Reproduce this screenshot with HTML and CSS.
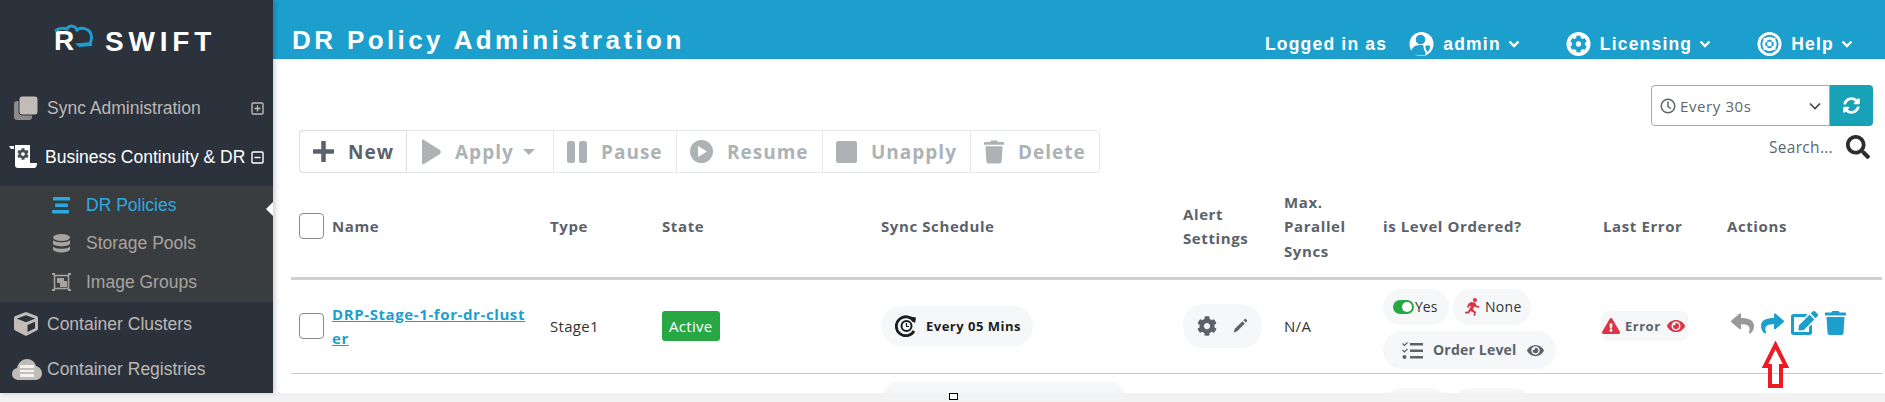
FILE: index.html
```html
<!DOCTYPE html>
<html lang="en">
<head>
    <meta charset="UTF-8">
    <meta name="viewport" content="width=device-width, initial-scale=1.0">
    <title>DR Policy Administration - RSWIFT</title>
    <link rel="stylesheet" href="styles.css">
</head>
<body>
    <svg class="sprites" width="0" height="0">
        <symbol id="i-eye" viewBox="0 0 576 512"><path d="M572.52 241.4C518.29 135.59 410.93 64 288 64S57.68 135.64 3.48 241.41a32.35 32.35 0 0 0 0 29.19C57.71 376.41 165.07 448 288 448s230.32-71.64 284.52-177.41a32.35 32.35 0 0 0 0-29.19zM288 400a144 144 0 1 1 144-144 143.93 143.93 0 0 1-144 144zm0-240a95.31 95.31 0 0 0-25.31 3.79 47.85 47.85 0 0 1-66.9 66.9A95.78 95.78 0 1 0 288 160z"/></symbol>
        <symbol id="i-cog" viewBox="0 0 512 512"><path d="M487.4 315.7l-42.6-24.6c4.3-23.2 4.3-47 0-70.2l42.6-24.6c4.9-2.8 7.1-8.6 5.5-14-11.1-35.6-30-67.8-54.7-94.6-3.8-4.1-10-5.1-14.8-2.3L380.8 110c-17.9-15.4-38.5-27.3-60.8-35.1V25.8c0-5.6-3.9-10.5-9.4-11.7-36.7-8.2-74.3-7.8-109.2 0-5.5 1.2-9.4 6.1-9.4 11.7V75c-22.2 7.9-42.8 19.8-60.8 35.1L88.7 85.5c-4.9-2.8-11-1.9-14.8 2.3-24.7 26.7-43.6 58.9-54.7 94.6-1.7 5.4.6 11.2 5.5 14L67.3 221c-4.3 23.2-4.3 47 0 70.2l-42.6 24.6c-4.9 2.8-7.1 8.6-5.5 14 11.1 35.6 30 67.8 54.7 94.6 3.8 4.1 10 5.1 14.8 2.3l42.6-24.6c17.9 15.4 38.5 27.3 60.8 35.1v49.2c0 5.6 3.9 10.5 9.4 11.7 36.7 8.2 74.3 7.8 109.2 0 5.5-1.2 9.4-6.1 9.4-11.7v-49.2c22.2-7.9 42.8-19.8 60.8-35.1l42.6 24.6c4.9 2.8 11 1.9 14.8-2.3 24.7-26.7 43.6-58.9 54.7-94.6 1.5-5.5-.7-11.3-5.6-14.1zM256 336c-44.1 0-80-35.9-80-80s35.9-80 80-80 80 35.9 80 80-35.9 80-80 80z"/></symbol>
        <symbol id="i-chev" viewBox="0 0 12 8"><path d="M1.5 1.5L6 6l4.5-4.5" fill="none" stroke="currentColor" stroke-width="2.4"/></symbol>
    </svg>

    <div class="app">
        <aside class="sidebar">
            <div class="logo">
                <svg class="logo-mark" width="42" height="32" viewBox="0 0 42 32">
                    <text x="0" y="26" class="logo-r">R</text>
                    <path d="M1 7C5 4 10 4 13 5 15 1 21 1 23 6 27 3 33 4 36 8 38 11 38 16 36 19" fill="none" stroke="#1d9fce" stroke-width="3"/>
                    <path d="M21 19.500L38 18 38 22 25 23z" fill="#1d9fce"/>
                </svg>
                <span class="logo-name">SWIFT</span>
            </div>
            <nav class="menu">
                <a class="menu-item item-sync">
                    <svg class="menu-icon" width="24" height="24" viewBox="0 0 24 24"><rect x="0" y="5" width="18" height="19" rx="3" fill="#8f8b88"/><rect x="5" y="0" width="19" height="19" rx="3" fill="#c2bcb8" stroke="#2b323b"/></svg>
                    <span>Sync Administration</span>
                    <svg class="toggle" width="13" height="13" viewBox="0 0 13 13"><rect x="1" y="1" width="11" height="11" rx="1" fill="none" stroke="currentColor" stroke-width="1.4"/><path d="M3.5 6.5h6M6.5 3.5v6" stroke="currentColor" stroke-width="1.4"/></svg>
                </a>
                <a class="menu-item item-open">
                    <svg class="menu-icon scroll-icon" width="30" height="24" viewBox="0 0 30 24"><path d="M1 1h5v3H3zM7 0h15v18h7c0 3-1 5-3 5H10c-2 0-3-1-3-3z" fill="#fff"/><use href="#i-cog" x="9" y="3" width="12" height="12" fill="#4a4f55"/></svg>
                    <span>Business Continuity &amp; DR</span>
                    <svg class="toggle" width="13" height="13" viewBox="0 0 13 13"><rect x="1" y="1" width="11" height="11" rx="1" fill="none" stroke="currentColor" stroke-width="1.4"/><path d="M3.5 6.5h6" stroke="currentColor" stroke-width="1.4"/></svg>
                </a>
                <div class="submenu">
                    <a class="sub-item current">
                        <svg width="19" height="17" viewBox="0 0 19 17" fill="#29abe2"><rect x="1" y="0" width="17" height="3.5" rx="1"/><rect x="3" y="6.5" width="13" height="3.5" rx="1"/><rect y="13" width="17" height="3.5" rx="1"/></svg>
                        <span>DR Policies</span>
                    </a>
                    <a class="sub-item">
                        <svg width="19" height="19" viewBox="0 0 19 19" fill="#a8a39f"><ellipse cx="9.5" cy="3.5" rx="8.5" ry="3.5"/><path d="M1 6c2 3 15 3 17 0v4c-2 3-15 3-17 0zM1 12.500c2 3 15 3 17 0V15.500c-2 4-15 4-17 0z"/></svg>
                        <span>Storage Pools</span>
                    </a>
                    <a class="sub-item">
                        <svg width="19" height="18" viewBox="0 0 19 18" fill="none" stroke="#a8a39f"><rect x="2.500" y="2.500" width="14" height="13" stroke-width="1.600"/><rect x="5" y="5" width="7" height="5" fill="#a8a39f" stroke="none"/><rect x="8" y="8" width="7" height="6" fill="#a8a39f" stroke="none"/><path d="M0 1h3M16 1h3M0 17h3M16 17h3" stroke-width="2"/></svg>
                        <span>Image Groups</span>
                    </a>
                    <i class="sub-pointer"></i>
                </div>
                <a class="menu-item item-clusters">
                    <svg class="menu-icon" width="24" height="24" viewBox="0 0 512 512"><path fill="#c2bcb8" d="M239.1 6.3l-208 78c-18.7 7-31.1 25-31.1 45v225.1c0 18.2 10.3 34.8 26.5 42.9l208 104c13.500 6.800 29.400 6.800 42.900 0l208-104c16.300-8.100 26.500-24.800 26.500-42.900V129.300c0-20-12.400-37.900-31.100-44.900l-208-78C262 2.200 250 2.200 239.100 6.300zM256 68.400l192 72v1.100l-192 78-192-78v-1.100l192-72zm32 356V275.500l160-65v133.900l-160 80z"/></svg>
                    <span>Container Clusters</span>
                </a>
                <a class="menu-item item-registries">
                    <svg class="menu-icon cloud-icon" width="30" height="21" viewBox="0 0 30 21"><path fill="#c2bcb8" d="M7 21C3 21 0 18.500 0 15c0-3 2-5.500 5-6C6 4 10 0 15 0c4.500 0 8 3 9 7 3.500.5 6 4 6 7.500C30 18.500 27 21 23 21z"/><rect x="8" y="6" width="14" height="12" fill="#f4f2f0"/><path d="M8 10h14M8 14h14" stroke="#8f8b88"/></svg>
                    <span>Container Registries</span>
                </a>
            </nav>
        </aside>

        <main class="main">
            <header class="topbar">
                <h1>DR Policy Administration</h1>
                <div class="topbar-right">
                    <span class="logged">Logged in as</span>
                    <a class="top-link">
                        <svg width="25" height="26" viewBox="0 0 26 26"><circle cx="13" cy="13" r="12.500" fill="#fff"/><circle cx="12" cy="8.500" r="5" fill="#1d9fce"/><path d="M2 21c1-5 5-7 10-7 2 0 4 .5 6 1.500l-1 9c-5 1-11 0-15-3.500z" fill="#1d9fce"/><path d="M15 14l5-1.500 4 1.500c0 5-2 8-4.500 9-3-1-4.500-4-4.500-9z" fill="#fff"/><path d="M17 15l2.500-.8 2.500.8c0 3-1 5-2.500 6-1.600-1-2.500-3-2.500-6z" fill="#1d9fce"/></svg>
                        <span>admin</span>
                        <svg class="chev" width="12" height="8"><use href="#i-chev"/></svg>
                    </a>
                    <a class="top-link">
                        <svg width="25" height="26" viewBox="0 0 26 26"><circle cx="13" cy="13" r="12.500" fill="#fff"/><use href="#i-cog" x="4" y="4" width="18" height="18" fill="#1d9fce"/></svg>
                        <span>Licensing</span>
                        <svg class="chev" width="12" height="8"><use href="#i-chev"/></svg>
                    </a>
                    <a class="top-link">
                        <svg width="25" height="26" viewBox="0 0 26 26" fill="none"><circle cx="13" cy="13" r="12.500" fill="#fff"/><circle cx="13" cy="13" r="8.500" stroke="#1d9fce" stroke-width="2"/><circle cx="13" cy="13" r="3.500" stroke="#1d9fce" stroke-width="2"/><path d="M7 7l3.500 3.500M19 7l-3.500 3.500M7 19l3.500-3.500M19 19l-3.500-3.500" stroke="#fff" stroke-width="2"/></svg>
                        <span>Help</span>
                        <svg class="chev" width="12" height="8"><use href="#i-chev"/></svg>
                    </a>
                </div>
            </header>

            <section class="controls">
                <div class="toolbar">
                    <button class="tool tool-new">
                        <svg width="21" height="21" viewBox="0 0 21 21"><path d="M10.500 1v19M1 10.500h19" stroke="currentColor" stroke-width="4.500" stroke-linecap="round" fill="none"/></svg>
                        New
                    </button>
                    <button class="tool tool-apply">
                        <svg width="21" height="26" viewBox="0 0 21 26"><path d="M2 1c0-1 1-1 2 0l16 10c1 1 1 3 0 4L4 25c-1 1-2 0-2-1z" fill="currentColor"/></svg>
                        Apply
                        <i class="caret"></i>
                    </button>
                    <button class="tool tool-pause">
                        <svg width="20" height="22" viewBox="0 0 20 22" fill="currentColor"><rect width="8" height="22" rx="2.500"/><rect x="12" width="8" height="22" rx="2.500"/></svg>
                        Pause
                    </button>
                    <button class="tool tool-resume">
                        <svg width="23" height="23" viewBox="0 0 23 23"><circle cx="11.500" cy="11.500" r="11.500" fill="currentColor"/><path d="M8 6l9 5.500L8 17z" fill="#fff"/></svg>
                        Resume
                    </button>
                    <button class="tool tool-unapply">
                        <svg width="21" height="22" viewBox="0 0 21 22"><rect width="21" height="22" rx="2.500" fill="currentColor"/></svg>
                        Unapply
                    </button>
                    <button class="tool tool-delete">
                        <svg width="20" height="24" viewBox="0 0 448 512" fill="currentColor"><path d="M432 32H312l-9.400-18.700A24 24 0 0 0 281.100 0H166.800a23.720 23.720 0 0 0-21.400 13.300L136 32H16A16 16 0 0 0 0 48v32a16 16 0 0 0 16 16h416a16 16 0 0 0 16-16V48a16 16 0 0 0-16-16zM53.200 467a48 48 0 0 0 47.900 45h245.800a48 48 0 0 0 47.900-45L416 128H32z"/></svg>
                        Delete
                    </button>
                </div>
                <div class="controls-right">
                    <div class="refresh-row">
                        <div class="select-box">
                            <svg width="16" height="16" viewBox="0 0 16 16" fill="none" stroke="#5c6670" stroke-width="1.500"><circle cx="8" cy="8" r="6.800"/><path d="M8 3.500V8.500l3 2"/></svg>
                            <span>Every 30s</span>
                            <svg class="select-chev" width="12" height="8" viewBox="0 0 12 8"><path d="M1 1.500l5 5 5-5" fill="none" stroke="#444" stroke-width="1.600"/></svg>
                        </div>
                        <button class="refresh-btn">
                            <svg width="17" height="17" viewBox="0 0 512 512" fill="#fff"><path d="M370.720 133.280C339.458 104.008 298.888 87.962 255.848 88c-77.458.068-144.328 53.178-162.791 126.850-1.344 5.363-6.122 9.150-11.651 9.150H24.103c-7.498 0-13.194-6.807-11.807-14.176C33.933 94.924 134.813 8 256 8c66.448 0 126.791 26.136 171.315 68.685L463.030 40.970C478.149 25.851 504 36.559 504 57.941V192c0 13.255-10.745 24-24 24H345.941c-21.382 0-32.090-25.851-16.971-40.971l41.750-41.749zM32 296h134.059c21.382 0 32.090 25.851 16.971 40.971l-41.750 41.750c31.262 29.273 71.835 45.319 114.876 45.280 77.418-.07 144.315-53.144 162.787-126.849 1.344-5.363 6.122-9.150 11.651-9.150h57.304c7.498 0 13.194 6.807 11.807 14.176C478.067 417.076 377.187 504 256 504c-66.448 0-126.791-26.136-171.315-68.685L48.970 471.030C33.851 486.149 8 475.441 8 454.059V320c0-13.255 10.745-24 24-24z"/></svg>
                        </button>
                    </div>
                    <div class="search-row">
                        <span>Search...</span>
                        <svg width="24" height="24" viewBox="0 0 512 512" fill="#2d2d2d"><path d="M505 442.700L405.300 343c-4.500-4.500-10.600-7-17-7H372c27.600-35.300 44-79.700 44-128C416 93.100 322.900 0 208 0S0 93.100 0 208s93.100 208 208 208c48.300 0 92.700-16.400 128-44v16.300c0 6.400 2.500 12.500 7 17l99.700 99.700c9.400 9.400 24.600 9.400 33.900 0l28.300-28.300c9.400-9.400 9.400-24.600.1-34zM208 336c-70.700 0-128-57.200-128-128 0-70.700 57.200-128 128-128 70.700 0 128 57.200 128 128 0 70.700-57.200 128-128 128z"/></svg>
                    </div>
                </div>
            </section>

            <table class="policies">
                <colgroup>
                    <col class="c-name"><col class="c-type"><col class="c-state"><col class="c-sync"><col class="c-alert"><col class="c-max"><col class="c-level"><col class="c-error"><col class="c-actions">
                </colgroup>
                <thead>
                    <tr>
                        <th><div class="name-cell"><i class="check"></i>Name</div></th>
                        <th>Type</th>
                        <th>State</th>
                        <th>Sync Schedule</th>
                        <th>Alert Settings</th>
                        <th>Max. Parallel Syncs</th>
                        <th>is Level Ordered?</th>
                        <th>Last Error</th>
                        <th>Actions</th>
                    </tr>
                </thead>
                <tbody>
                    <tr class="row-first">
                        <td><div class="name-cell"><i class="check"></i><a class="policy-link">DRP-Stage-1-for-dr-cluster</a></div></td>
                        <td>Stage1</td>
                        <td><span class="badge">Active</span></td>
                        <td>
                            <span class="pill sync-pill">
                                <svg width="22" height="22" viewBox="0 0 22 22" fill="none" stroke="#1c1c1c"><path d="M19 6.500A9.500 9.500 0 1 0 19 16" stroke-width="2.800"/><path d="M15 1.500l6 1-1 6z" fill="#1c1c1c" stroke="none"/><circle cx="11.500" cy="11" r="5" stroke-width="2"/><path d="M11.500 8v3.500h2.500" stroke-width="1.200"/></svg>
                                Every 05 Mins
                            </span>
                        </td>
                        <td>
                            <span class="pill alert-pill">
                                <svg width="20" height="20" fill="#5b626b"><use href="#i-cog"/></svg>
                                <svg width="16" height="16" viewBox="0 0 16 16" fill="#5b626b"><path d="M10.500 3.200l2.300 2.300L5.200 13.200 1.500 14.500l1.300-3.800zM11.500 2.200l1-1c.5-.5 1.100-.5 1.600 0l.7.700c.5.500.5 1.100 0 1.600l-1 1z"/></svg>
                            </span>
                        </td>
                        <td>N/A</td>
                        <td>
                            <div class="level-cell">
                                <span class="pill yes-pill"><i class="switch"></i>Yes</span>
                                <span class="pill none-pill">
                                    <svg width="15" height="18" viewBox="0 0 15 18" fill="#dc3545"><circle cx="10" cy="2" r="2"/><path d="M6 4l4 .5 1.500 3 3 1-.5 1.500-3.500-1L9 8.500 8 11.500l3 2.500-1 4-1.500-.5.500-2.800L5.500 13 4 15.500H0v-1.700l3-.3L6 8 4.500 8 3.500 10 2 9.300 3.500 5.500z"/></svg>
                                    None
                                </span>
                                <span class="pill order-pill">
                                    <svg width="21" height="17" viewBox="0 0 21 17" fill="#5b626b"><rect x="8" y="1" width="13" height="2.500"/><rect x="8" y="7.500" width="13" height="2.500"/><rect x="8" y="14" width="13" height="2.500"/><circle cx="2.500" cy="15" r="2"/><path d="M.5 1.500l2 2 3-3M.5 8l2 2 3-3" fill="none" stroke="#5b626b" stroke-width="1.200"/></svg>
                                    Order Level
                                    <svg width="17" height="15" fill="#5b626b"><use href="#i-eye"/></svg>
                                </span>
                            </div>
                        </td>
                        <td>
                            <span class="pill error-pill">
                                <svg width="18" height="16" viewBox="0 0 576 512" fill="#dc3545"><path d="M569.517 440.013C587.975 472.007 564.806 512 527.940 512H48.054c-36.937 0-59.999-40.055-41.577-71.987L246.423 23.985c18.467-32.009 64.720-31.951 83.154 0l239.940 416.028zM288 354c-25.405 0-46 20.595-46 46s20.595 46 46 46 46-20.595 46-46-20.595-46-46-46zm-43.673-165.346l7.418 136c.347 6.364 5.609 11.346 11.982 11.346h48.546c6.373 0 11.635-4.982 11.982-11.346l7.418-136c.375-6.874-5.098-12.654-11.982-12.654h-63.383c-6.884 0-12.356 5.780-11.981 12.654z"/></svg>
                                Error
                                <svg class="error-eye" width="18" height="16" fill="#dc3545"><use href="#i-eye"/></svg>
                            </span>
                        </td>
                        <td>
                            <div class="actions">
                                <svg width="23" height="23" viewBox="0 0 512 512" fill="#999"><path d="M8.309 189.836L184.313 37.851C199.719 24.546 224 35.347 224 56.015v80.053c160.629 1.839 288 34.032 288 186.258 0 61.441-39.581 122.309-83.333 154.132-13.653 9.931-33.111-2.533-28.077-18.631 45.344-145.012-21.507-183.510-176.590-185.742V360c0 20.700-24.300 31.453-39.687 18.164l-176.004-152c-11.071-9.562-11.086-26.753 0-36.328z"/></svg>
                                <svg width="23" height="23" viewBox="0 0 512 512" fill="#1d9fce"><path d="M503.691 189.836L327.687 37.851C312.281 24.546 288 35.347 288 56.015v80.053C127.371 137.907 0 170.100 0 322.326c0 61.441 39.581 122.309 83.333 154.132 13.653 9.931 33.111-2.533 28.077-18.631C66.066 312.814 132.917 274.316 288 272.085V360c0 20.700 24.300 31.453 39.687 18.164l176.004-152c11.071-9.562 11.086-26.753 0-36.328z"/></svg>
                                <svg width="27" height="24" viewBox="0 0 576 512" fill="#1d9fce"><path d="M402.600 83.200l90.200 90.200c3.800 3.800 3.800 10 0 13.800L274.400 405.600l-92.800 10.300c-12.400 1.400-22.900-9.100-21.500-21.500l10.300-92.800L388.800 83.200c3.800-3.800 10-3.800 13.800 0zm162-22.900l-48.800-48.800c-15.200-15.200-39.900-15.200-55.200 0l-35.400 35.400c-3.800 3.800-3.800 10 0 13.800l90.200 90.200c3.800 3.800 10 3.800 13.800 0l35.400-35.400c15.200-15.300 15.200-40 0-55.200zM384 346.200V448H64V128h229.800c3.200 0 6.200-1.300 8.500-3.500l40-40c7.600-7.600 2.200-20.500-8.500-20.500H48C21.500 64 0 85.500 0 112v352c0 26.500 21.500 48 48 48h352c26.500 0 48-21.500 48-48V306.200c0-10.700-12.900-16-20.500-8.500l-40 40c-2.200 2.300-3.500 5.300-3.500 8.500z"/></svg>
                                <svg width="21" height="24" viewBox="0 0 448 512" fill="#1d9fce"><path d="M432 32H312l-9.400-18.700A24 24 0 0 0 281.100 0H166.800a23.720 23.720 0 0 0-21.400 13.300L136 32H16A16 16 0 0 0 0 48v32a16 16 0 0 0 16 16h416a16 16 0 0 0 16-16V48a16 16 0 0 0-16-16zM53.200 467a48 48 0 0 0 47.900 45h245.800a48 48 0 0 0 47.900-45L416 128H32z"/></svg>
                            </div>
                        </td>
                    </tr>
                    <tr class="row-next">
                        <td></td><td></td><td></td>
                        <td><span class="pill wide-pill"></span></td>
                        <td></td><td></td>
                        <td><div class="level-cell"><span class="pill yes-pill"></span><span class="pill none-pill"></span></div></td>
                        <td></td><td></td>
                    </tr>
                </tbody>
            </table>

            <svg class="annotation" width="29" height="48" viewBox="0 0 29 48"><path d="M14.500 4L25 25H20V45H9V25H4z" fill="none" stroke="#ed1c24" stroke-width="4"/></svg>
        </main>
    </div>

    <footer class="statusbar"><i class="grip"></i></footer>
</body>
</html>
```

FILE: styles.css
```css
* {
    box-sizing: border-box;
}
html, body {
    height: 402px;
}
body {
    margin: 0;
    overflow: hidden;
    font-family: "Open Sans", sans-serif;
    font-size: 15px;
    letter-spacing: 0.3px;
    color: #333;
    background: #f2f2f2;
}
.sprites {
    position: absolute;
}
.app {
    display: flex;
    height: 393px;
}

/* sidebar */
.sidebar {
    flex: 0 0 273px;
    background: #2b323b;
    font-family: "Liberation Sans", sans-serif;
    letter-spacing: 0;
    box-shadow: 2px 0 5px rgba(0, 0, 0, 0.2);
    z-index: 1;
}
.logo {
    display: flex;
    align-items: center;
    height: 85px;
    padding: 0 0 0 54px;
}
.logo-mark {
    margin: -6px 9px 0 0;
}
.logo-r {
    font: bold 28px "Liberation Sans", sans-serif;
    fill: #fff;
}
.logo-name {
    margin-top: -2px;
    font-weight: bold;
    font-size: 28px;
    letter-spacing: 4.8px;
    color: #fff;
}
.menu-item {
    display: flex;
    align-items: center;
    padding-left: 14px;
    font-size: 17.5px;
    color: #bdb8b4;
}
.menu-icon {
    margin-right: 9px;
    flex: none;
}
.item-sync {
    height: 46px;
}
.item-open {
    height: 55px;
    padding: 0 0 3px 8px;
    color: #fff;
}
.scroll-icon {
    margin-right: 7px;
}
.item-clusters {
    height: 44px;
}
.item-registries {
    height: 47px;
    padding-left: 12px;
}
.cloud-icon {
    margin-right: 5px;
}
.toggle {
    margin-left: auto;
    margin-right: 9px;
    flex: none;
}
.submenu {
    position: relative;
    background: #3a3d40;
    height: 116px;
}
.sub-item {
    display: flex;
    align-items: center;
    gap: 15px;
    height: 38.500px;
    padding-left: 52px;
    font-size: 17.5px;
    color: #a8a39f;
}
.sub-item.current {
    color: #29abe2;
}
.sub-pointer {
    position: absolute;
    right: 0;
    top: 16px;
    border: 7px solid transparent;
    border-left: 0;
    border-right-color: #fff;
}

/* main column */
.main {
    position: relative;
    flex: 1;
    min-width: 0;
    overflow: hidden;
    background: #fff;
}
.topbar {
    display: flex;
    justify-content: space-between;
    align-items: flex-end;
    height: 59px;
    padding: 0 32px 2px 19px;
    background: #1d9fce;
    color: #fff;
    font-family: "Liberation Sans", sans-serif;
    font-weight: bold;
}
.topbar h1 {
    margin: 0 0 1px;
    font-size: 26px;
    letter-spacing: 3.4px;
}
.topbar-right {
    display: flex;
    align-items: center;
    font-size: 17.5px;
    letter-spacing: 1.2px;
}
.logged {
    margin-right: 22px;
}
.top-link {
    display: flex;
    align-items: center;
    gap: 9px;
    margin-right: 46px;
}
.top-link:last-child {
    margin-right: 0;
}
.chev {
    margin-left: -2px;
}

/* toolbar row */
.controls {
    display: flex;
    justify-content: space-between;
    align-items: flex-start;
    height: 119px;
    padding: 26px 12px 0 26px;
}
.toolbar {
    display: flex;
    margin-top: 45px;
    height: 43px;
    border: 1px solid #e6e8ea;
    border-radius: 4px;
}
.tool {
    display: flex;
    align-items: center;
    gap: 14px;
    padding: 0 0 0 13px;
    border: 0;
    border-right: 1px solid #e6e8ea;
    background: none;
    font-family: "Open Sans", sans-serif;
    font-weight: bold;
    font-size: 19px;
    letter-spacing: 1px;
    color: #adb2b5;
}
.tool:last-child {
    border-right: 0;
}
.tool-new {
    width: 108px;
    color: #5b626b;
    border: 1px solid #dcdee0;
    margin: -1px 0 -1px -1px;
    border-radius: 4px 0 0 4px;
}
.tool-apply { width: 147px; }
.tool-pause { width: 123px; }
.tool-resume { width: 146px; }
.tool-unapply { width: 148px; }
.tool-delete { width: 128px; }
.caret {
    margin-left: -5px;
    border: 6px solid transparent;
    border-bottom: 0;
    border-top-color: #adb2b5;
}
.controls-right {
    display: flex;
    flex-direction: column;
    align-items: flex-end;
}
.refresh-row {
    display: flex;
    height: 41px;
}
.select-box {
    display: flex;
    align-items: center;
    gap: 4px;
    width: 179px;
    padding: 0 8px;
    border: 1px solid #a8a8a8;
    border-radius: 4px 0 0 4px;
    color: #5c6670;
    letter-spacing: 0.6px;
}
.select-chev {
    margin-left: auto;
}
.refresh-btn {
    display: flex;
    align-items: center;
    justify-content: center;
    width: 43px;
    border: 0;
    border-radius: 0 4px 4px 0;
    background: #17a2b8;
}
.search-row {
    display: flex;
    align-items: center;
    gap: 13px;
    margin: 9px 3px 0 0;
    color: #5c6670;
    font-size: 15.500px;
}

/* table */
.policies {
    table-layout: fixed;
    border-collapse: collapse;
    width: 1591px;
    margin-left: 18px;
}
.c-name { width: 251px; }
.c-type { width: 112px; }
.c-state { width: 219px; }
.c-sync { width: 302px; }
.c-alert { width: 101px; }
.c-max { width: 99px; }
.c-level { width: 220px; }
.c-error { width: 124px; }
.c-actions { width: 163px; }
.policies th, .policies td {
    padding: 0 8px;
    vertical-align: middle;
    text-align: left;
    line-height: 24.500px;
}
.policies th {
    height: 100px;
    padding-bottom: 2px;
    font-weight: bold;
    letter-spacing: 0.6px;
    color: #5b626b;
    border-bottom: 3px solid #d0d0d0;
}
.row-first td {
    height: 95px;
    border-bottom: 1px solid #c8c8c8;
}
.row-next td {
    padding-top: 8px;
    vertical-align: top;
}
.name-cell {
    display: flex;
    align-items: center;
    gap: 8px;
}
.check {
    flex: none;
    width: 25px;
    height: 26px;
    border: 1px solid #8a8a8a;
    border-radius: 4px;
}
.policy-link {
    width: 197px;
    font-weight: bold;
    letter-spacing: 0.6px;
    color: #1d9fce;
    text-decoration: underline;
    word-break: break-all;
}
.badge {
    display: inline-block;
    padding: 0 7px;
    line-height: 30px;
    border-radius: 3px;
    color: #fff;
    background: #28a745;
}
.pill {
    display: inline-flex;
    align-items: center;
    background: #f6f7f9;
    border-radius: 20px;
}
.sync-pill {
    gap: 9px;
    height: 40px;
    padding: 0 12px 0 14px;
    font-weight: bold;
    font-size: 13px;
    letter-spacing: 0.5px;
    color: #1c1c1c;
}
.alert-pill {
    gap: 15px;
    height: 44px;
    padding: 0 14px;
}
.level-cell {
    display: flex;
    flex-wrap: wrap;
    gap: 6px 4px;
    margin-top: 6px;
}
.yes-pill {
    width: 66px;
    height: 36px;
    padding-left: 10px;
    font-size: 14px;
    letter-spacing: 0;
}
.none-pill {
    gap: 5px;
    width: 78px;
    height: 36px;
    padding-left: 12px;
    font-size: 14px;
}
.switch {
    position: relative;
    width: 21px;
    height: 14px;
    margin-right: 1px;
    border-radius: 7px;
    background: #28a745;
}
.switch::after {
    content: "";
    position: absolute;
    right: 2px;
    top: 2px;
    width: 10px;
    height: 10px;
    border-radius: 50%;
    background: #fff;
}
.order-pill {
    gap: 10px;
    width: 173px;
    height: 38px;
    padding-left: 19px;
    font-weight: bold;
    font-size: 14px;
    letter-spacing: 0.2px;
    color: #5b626b;
}
.error-pill {
    gap: 5px;
    height: 30px;
    margin-left: -1px;
    padding-right: 3px;
    border-radius: 6px;
    font-weight: bold;
    font-size: 13px;
    letter-spacing: 0.5px;
    color: #5b626b;
}
.error-eye {
    margin-left: 1px;
}
.actions {
    display: flex;
    align-items: center;
    gap: 7px;
    margin: -6px 0 0 4px;
}
.wide-pill {
    width: 246px;
    height: 36px;
}
.annotation {
    position: absolute;
    left: 1488px;
    top: 341px;
}

.statusbar {
    height: 9px;
    padding-left: 949px;
}
.grip {
    display: block;
    width: 9px;
    height: 7px;
    border: 1px solid #000;
    background: #fff;
}
```
